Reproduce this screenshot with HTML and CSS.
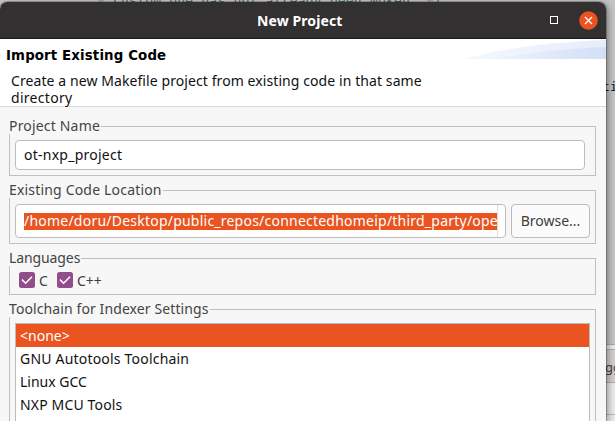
FILE: index.html
```html
<!DOCTYPE html>
<html lang="en">
<head>
<meta charset="utf-8">
<title>New Project</title>
<link rel="stylesheet" href="styles.css">
</head>
<body>
<div class="editor" aria-hidden="true">
  <div class="code-top">* custom one has not already been woken. */</div>
  <div class="code-side">ti</div>
  <div class="panel"><div class="panel-tab">gg</div><div class="panel-bar"></div></div>
</div>
<main class="dialog">
  <header class="titlebar">
    <span class="title"><span class="t-title">New Project</span></span>
    <svg class="maximize" width="8" height="8" viewBox="0 0 8 8"><rect x=".5" y=".5" width="7" height="7" fill="none" stroke="#fff"/></svg>
    <svg class="close" width="19" height="19" viewBox="0 0 19 19"><circle cx="9.5" cy="9.5" r="9.3" fill="#e95420"/><path d="M6 6l7 7M13 6l-7 7" stroke="#fff" stroke-width="1.3"/></svg>
  </header>
  <section class="banner">
    <svg class="swoosh" width="142" height="20" viewBox="0 0 142 20">
      <defs>
        <linearGradient id="a"><stop offset="0" stop-color="#f4f7fe"/><stop offset="1" stop-color="#e6edfb"/></linearGradient>
        <linearGradient id="b"><stop offset="0" stop-color="#eef3fd"/><stop offset="1" stop-color="#d3dff7"/></linearGradient>
      </defs>
      <path d="M0 20C38 9 88 3 142 1V20Z" fill="url(#a)"/>
      <path d="M28 20C65 14 105 9 142 8V20Z" fill="url(#b)"/>
    </svg>
    <h1><span class="t-h1">Import Existing Code</span></h1>
    <p><span class="t-desc">Create a new Makefile project from existing code in that same</span><br><span class="t-dir">directory</span></p>
  </section>
  <form class="form">
    <fieldset>
      <legend><span class="t-pn">Project Name</span></legend>
      <div class="field name-field"><span class="t-ot">ot-nxp_project</span></div>
    </fieldset>
    <fieldset>
      <legend><span class="t-ecl">Existing Code Location</span></legend>
      <div class="row">
        <div class="field path-field"><div class="clip"><span class="selected"><span class="t-path">/home/doru/Desktop/public_repos/connectedhomeip/third_party/ope</span></span></div></div>
        <button type="button"><span class="t-br">Browse...</span></button>
      </div>
    </fieldset>
    <fieldset>
      <legend><span class="t-lang">Languages</span></legend>
      <div class="checks">
        <span class="check"><svg width="16" height="16" viewBox="0 0 16 16"><rect width="16" height="16" rx="2.5" fill="#924d8b"/><path d="M3 7.6l3.6 3.6L13 4.8" fill="none" stroke="#fff" stroke-width="1.6"/></svg><span class="t-c">C</span></span>
        <span class="check"><svg width="16" height="16" viewBox="0 0 16 16"><rect width="16" height="16" rx="2.5" fill="#924d8b"/><path d="M3 7.6l3.6 3.6L13 4.8" fill="none" stroke="#fff" stroke-width="1.6"/></svg><span class="t-cpp">C++</span></span>
      </div>
    </fieldset>
    <fieldset class="toolchain">
      <legend><span class="t-tis">Toolchain for Indexer Settings</span></legend>
      <ul class="list">
        <li class="active"><span class="t-none">&lt;none&gt;</span></li>
        <li><span class="t-gnu">GNU Autotools Toolchain</span></li>
        <li><span class="t-gcc">Linux GCC</span></li>
        <li><span class="t-nxp">NXP MCU Tools</span></li>
      </ul>
    </fieldset>
  </form>
</main>
</body>
</html>
```
FILE: styles.css
```css
* { box-sizing: border-box; }
body { margin: 0; width: 615px; height: 421px; overflow: hidden; position: relative; display: flex; align-items: flex-start; background: #c4c4c4; font: 14px/17px "Noto Sans", sans-serif; color: #111; }

/* editor window behind the dialog */
.editor { position: absolute; inset: 0; font-family: "DejaVu Sans Mono", monospace; font-size: 13px; }
.code-top { position: absolute; left: 97px; top: -7px; line-height: 15px; letter-spacing: .2px; color: #4c6b5c; white-space: pre; }
.code-side { position: absolute; left: 602px; top: 78px; }
.panel { position: absolute; left: 600px; top: 344px; width: 15px; height: 77px; background: #eaeaea; border-top: 1px solid #aaa; padding-top: 4px; font-family: "Noto Sans", sans-serif; }
.panel-tab { height: 34px; padding-left: 5px; line-height: 34px; background: #d3cfcc; border-top: 1px solid #b5b0ab; border-bottom: 1px solid #b9ac9a; overflow: hidden; color: #3c3c3c; }
.panel-bar { height: 32px; border-bottom: 1px solid #bbb; }

.dialog { position: relative; width: 606px; height: 419px; margin-top: 2px; background: #f7f7f7; border-radius: 7px 7px 0 0; overflow: hidden; box-shadow: 0 0 0 1px rgba(0,0,0,.22), 2px 2px 7px rgba(0,0,0,.4); display: flex; flex-direction: column; }
.titlebar { flex: none; height: 37px; background: #323030; border-bottom: 1px solid #1b1a1a; display: grid; grid-template-columns: 550px 8px 21px 19px 8px; align-items: center; color: #fff; }
.title { padding-left: 257px; font-weight: 700; }
.close { grid-column: 4; }
.banner { flex: none; height: 68px; position: relative; background: #fff; border-bottom: 1px solid #d8d8d8; padding: 9px 0 0 6px; }
.swoosh { position: absolute; right: 0; top: 0; }
h1 { margin: 0; font: 700 13.33px/16px "DejaVu Sans", sans-serif; color: #000; position: relative; }
p { margin: 8px 0 0 5px; line-height: 17px; white-space: nowrap; }

.form { padding: 12px 10px 0 9px; display: flex; flex-direction: column; gap: 7px; flex: 1; min-height: 0; }
fieldset { flex: none; margin: 0; min-width: 0; border: 1px solid #bfbfbf; padding: 6px 5px 5px; height: 57px; }
fieldset:nth-child(2) { height: 61px; }
fieldset:nth-child(3) { height: 44px; }
fieldset.toolchain { height: 140px; }
legend { height: 15px; line-height: 13px; margin-left: -6px; padding: 0 1px 0 0; background: #f7f7f7; color: #444; white-space: nowrap; }
.field { background: #fff; border: 1px solid #bcbcbc; border-radius: 4px; padding-left: 8px; display: flex; align-items: center; }
.name-field { width: 570px; height: 30px; padding-bottom: 2px; }
.row { display: flex; gap: 5px; }
.path-field { width: 491px; height: 34px; }
.clip { width: 474px; height: 32px; overflow: hidden; border-right: 1px solid #ddd; display: flex; align-items: center; white-space: nowrap; }
.selected { height: 17px; line-height: 15px; min-width: 100%; background: #e95420; color: #fff; flex: none; }
button { width: 79px; height: 34px; padding: 0 0 2px; border: 1px solid #bcbcbc; border-radius: 4px; background: #fbfbfb; font: inherit; color: #3d3d3d; }
.checks { display: flex; padding-left: 4px; }
.check { display: flex; width: 38px; gap: 4px; height: 16px; align-items: center; color: #3d3d3d; }
.check svg { flex: none; }
.list { margin: 0; padding: 0; list-style: none; width: 575px; height: 120px; background: #fff; border: 1px solid #bcbcbc; }
.list li { height: 23px; line-height: 23px; padding-left: 4px; }
.list .active { background: #e95420; color: #fff; }

/* label tracking */
.t-title { letter-spacing: .1px; }
.t-h1 { letter-spacing: .14px; }
.t-desc { letter-spacing: .085px; }
.t-dir { letter-spacing: .3px; }
.t-pn, .t-ecl { letter-spacing: .18px; }
.t-ot { letter-spacing: .25px; }
.t-path { letter-spacing: .225px; }
.t-lang { letter-spacing: -.1px; }
.t-tis { letter-spacing: .1px; }
.t-gnu { letter-spacing: .2px; }
.t-nxp { letter-spacing: .15px; }
```
